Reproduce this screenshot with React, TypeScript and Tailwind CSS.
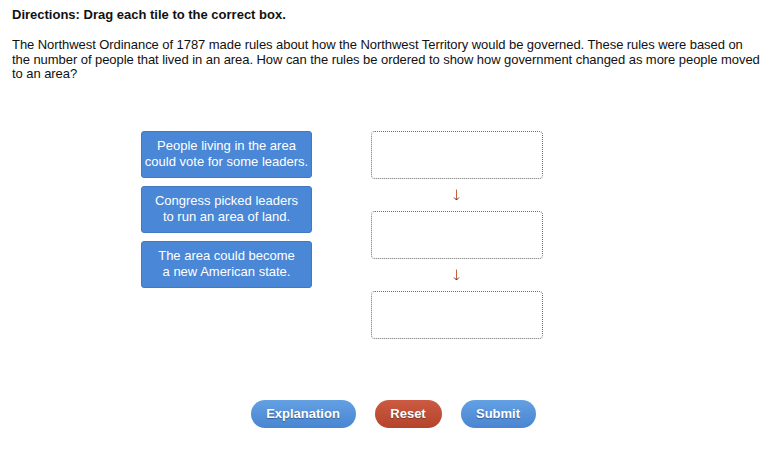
import React from 'react';

const tiles = [
  ['People living in the area', 'could vote for some leaders.'],
  ['Congress picked leaders', 'to run an area of land.'],
  ['The area could become', 'a new American state.'],
];

function Arrow() {
  return (
    <div className="h-[32px] flex items-center justify-center">
      <svg width="7" height="12" viewBox="0 0 7 12" className="ml-[-1px]">
        <path d="M3.5 0.5V11" stroke="#c8603f" strokeWidth="1" />
        <path d="M1 8.5L3.5 11L6 8.5" stroke="#3a3a3a" strokeWidth="1" fill="none" />
      </svg>
    </div>
  );
}

function DropBox() {
  return <div className="h-[48px] rounded-[4px] border border-dotted border-[#6b6b6b]" />;
}

export default function App() {
  return (
    <div className="w-[778px] h-[450px] bg-white text-[#111] font-['Liberation_Sans',Arial,sans-serif]">
      <div className="pl-3 pt-[7px]">
        <h1 className="text-[13px] leading-[15px] font-bold">Directions: Drag each tile to the correct box.</h1>
        <p className="mt-[16px] text-[13px] leading-[14.5px] tracking-[-0.06px] whitespace-nowrap">
          The Northwest Ordinance of 1787 made rules about how the Northwest Territory would be governed. These rules were based on
          <br />
          the number of people that lived in an area. How can the rules be ordered to show how government changed as more people moved
          <br />
          to an area?
        </p>
      </div>

      {/* Tiles and drop boxes */}
      <div className="flex gap-[59px] pl-[141px] mt-[49px]">
        <div className="w-[171px] flex flex-col gap-[8px]">
          {tiles.map((lines) => (
            <div
              key={lines[0]}
              className="h-[47px] rounded-[3px] bg-[#4a87d7] border border-[#4379c0] flex flex-col items-center justify-center text-white text-[13px] leading-[16px] text-center"
            >
              <span>{lines[0]}</span>
              <span>{lines[1]}</span>
            </div>
          ))}
        </div>
        <div className="w-[172px] flex flex-col">
          <DropBox />
          <Arrow />
          <DropBox />
          <Arrow />
          <DropBox />
        </div>
      </div>

      {/* Buttons */}
      <div className="flex justify-center gap-[19px] mt-[61px] pl-[8px]">
        <button className="h-[28px] w-[105px] rounded-full bg-gradient-to-b from-[#63a0e2] to-[#4a85d2] text-white text-[13px] font-bold [text-shadow:0_1px_1px_rgba(0,0,0,0.35)]">
          Explanation
        </button>
        <button className="h-[28px] w-[67px] rounded-full bg-gradient-to-b from-[#cc5a42] to-[#b5442c] text-white text-[13px] font-bold [text-shadow:0_1px_1px_rgba(0,0,0,0.35)]">
          Reset
        </button>
        <button className="h-[28px] w-[75px] rounded-full bg-gradient-to-b from-[#63a0e2] to-[#4a85d2] text-white text-[13px] font-bold [text-shadow:0_1px_1px_rgba(0,0,0,0.35)]">
          Submit
        </button>
      </div>
    </div>
  );
}
